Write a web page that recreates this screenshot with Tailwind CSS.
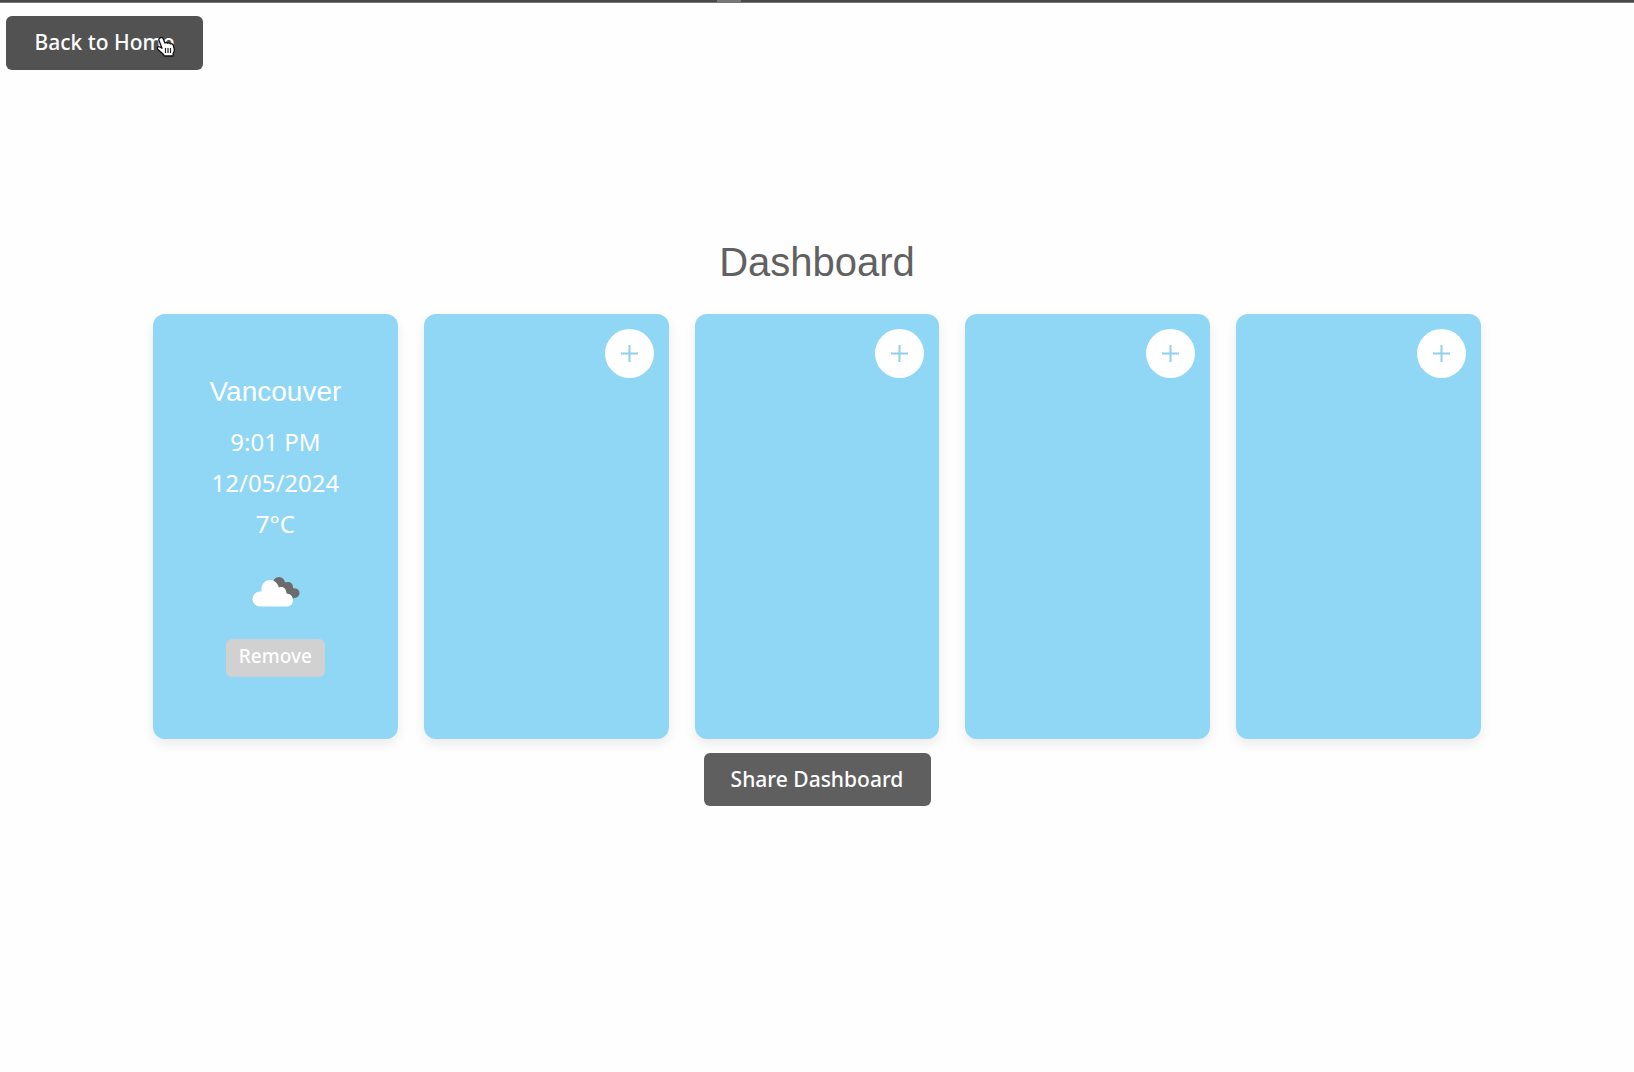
<!DOCTYPE html>
<html lang="en">
<head>
<meta charset="utf-8">
<meta name="viewport" content="width=device-width, initial-scale=1">
<title>Dashboard</title>
<script src="https://cdn.jsdelivr.net/npm/@tailwindcss/browser@4"></script>
</head>
<body class="min-h-screen bg-[#fefefe] font-['Noto_Sans',sans-serif]">
<div class="flex h-[3px] justify-center bg-[#4a484a] border-b border-[#777]"><span class="mr-44 h-[3px] w-6 bg-[#777]"></span></div>
<header class="relative px-[6px] pt-[13px]">
  <button type="button" class="h-[54px] min-w-[197px] cursor-pointer rounded-md bg-[#525252] px-[26px] text-[21px] font-medium text-white">Back to Home</button>
  <!-- Hand pointer -->
  <svg class="pointer-events-none absolute left-[156px] top-[33px]" width="20" height="22" viewBox="0 0 20 22" aria-hidden="true">
    <path d="M4 2C5.500 1 6.800 1.700 7.300 3l1.700 4c1-.8 2-.6 2.600.2 1-.6 2-.3 2.500.6 1.400-.5 2.800.2 3.200 1.500l1 4c.2 2-.5 3-1.200 4.200v2.500H8.500L7.500 18.500 2 13.500c-1.700-1.700 0-3.500 1.800-2.500L6 12.200 3 4.500C2.600 3.500 3 2.500 4 2z" fill="#fff" stroke="#111" stroke-width="1.300" stroke-linejoin="round"/>
    <path d="M9.500 12v5M12 12v5M14.500 12v5" stroke="#222" stroke-width="1.200"/>
  </svg>
</header>
<main class="flex flex-col items-center px-[153px] pt-[168px]">
  <h1 class="font-['Liberation_Sans',sans-serif] text-[40px] leading-[48px] font-normal text-[#616161]">Dashboard</h1>
  <div class="mt-7 grid w-full grid-cols-5 gap-[26px]">
    <section class="flex min-h-[425px] flex-col items-center rounded-xl bg-[#90d7f5] pt-[57px] text-[24px] leading-[41px] text-white shadow-[0_5px_12px_rgba(0,0,0,0.08)]">
      <h2 class="font-['Liberation_Sans',sans-serif] text-[28px] leading-[42px] text-white">Vancouver</h2>
      <p class="mt-2">9:01 PM</p>
      <p>12/05/2024</p>
      <p>7°C</p>
      <svg class="mt-8" width="50" height="32" viewBox="0 0 50 32" role="img" aria-label="Cloudy">
        <g fill="#6b6b6b"><circle cx="29" cy="7" r="6"/><circle cx="38" cy="11" r="5"/><circle cx="45" cy="17" r="4.500"/><path d="M26 10l8 9 8 4 5-2-2-8-10-7z"/></g>
        <path d="M10 30.500a7.500 7.500 0 0 1 0-15l1.500-.2C10.800 8.500 15 4 20 4c4.500 0 7.500 3 9 7.500 4-1.500 7.500 1 7.500 6 3.500.2 6.500 2.500 6.500 6.500s-2.500 6.500-6 6.500z" fill="#fff"/>
      </svg>
      <button type="button" class="mt-[31px] h-[38px] cursor-pointer rounded-md bg-[#d1d1d1] px-[13px] pb-1 text-[19px] leading-6 font-medium text-white">Remove</button>
    </section>
    <section class="flex min-h-[425px] items-start justify-end rounded-xl bg-[#90d7f5] p-[15px] shadow-[0_5px_12px_rgba(0,0,0,0.08)]">
      <button type="button" aria-label="Add city" class="grid size-[49px] cursor-pointer place-items-center rounded-full bg-white"><svg width="17" height="17" viewBox="0 0 17 17"><path d="M8.500 0v17M0 8.500h17" stroke="#90d0ea" stroke-width="2"/></svg></button>
    </section>
    <section class="flex min-h-[425px] items-start justify-end rounded-xl bg-[#90d7f5] p-[15px] shadow-[0_5px_12px_rgba(0,0,0,0.08)]">
      <button type="button" aria-label="Add city" class="grid size-[49px] cursor-pointer place-items-center rounded-full bg-white"><svg width="17" height="17" viewBox="0 0 17 17"><path d="M8.500 0v17M0 8.500h17" stroke="#90d0ea" stroke-width="2"/></svg></button>
    </section>
    <section class="flex min-h-[425px] items-start justify-end rounded-xl bg-[#90d7f5] p-[15px] shadow-[0_5px_12px_rgba(0,0,0,0.08)]">
      <button type="button" aria-label="Add city" class="grid size-[49px] cursor-pointer place-items-center rounded-full bg-white"><svg width="17" height="17" viewBox="0 0 17 17"><path d="M8.500 0v17M0 8.500h17" stroke="#90d0ea" stroke-width="2"/></svg></button>
    </section>
    <section class="flex min-h-[425px] items-start justify-end rounded-xl bg-[#90d7f5] p-[15px] shadow-[0_5px_12px_rgba(0,0,0,0.08)]">
      <button type="button" aria-label="Add city" class="grid size-[49px] cursor-pointer place-items-center rounded-full bg-white"><svg width="17" height="17" viewBox="0 0 17 17"><path d="M8.500 0v17M0 8.500h17" stroke="#90d0ea" stroke-width="2"/></svg></button>
    </section>
  </div>
  <button type="button" class="mt-[14px] h-[53px] min-w-[227px] cursor-pointer rounded-md bg-[#5f5f5f] px-[26px] text-[21px] font-medium text-white">Share Dashboard</button>
</main>
</body>
</html>
